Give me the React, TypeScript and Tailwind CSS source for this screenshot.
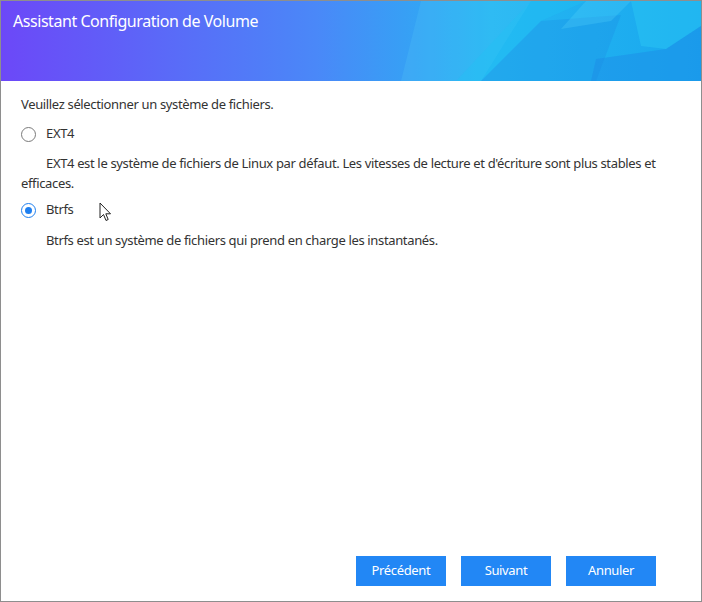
import React, { useState } from 'react'

const FONT = { fontFamily: '"Segoe UI", "Noto Sans", "Open Sans", sans-serif' }

function Radio({ checked }: { checked: boolean }) {
  return (
    <span
      className={
        checked
          ? 'flex h-[15px] w-[15px] items-center justify-center rounded-full border-[1.5px] border-[#1e7ff0] bg-white'
          : 'flex h-[15px] w-[15px] items-center justify-center rounded-full border border-[#7a7a7a] bg-white'
      }
    >
      {checked && <span className="h-[7px] w-[7px] rounded-full bg-[#1e7ff0]" />}
    </span>
  )
}

function HeaderArt() {
  return (
    <svg className="absolute inset-0 h-full w-full" viewBox="0 0 700 80" preserveAspectRatio="none">
      <defs>
        <linearGradient id="hdr" x1="0" y1="0" x2="1" y2="0">
          <stop offset="0" stopColor="#6c48f8" />
          <stop offset="0.45" stopColor="#4a88f8" />
          <stop offset="0.7" stopColor="#25b6f2" />
          <stop offset="1" stopColor="#19a8ee" />
        </linearGradient>
      </defs>
      <rect width="700" height="80" fill="url(#hdr)" />
      <polygon points="420,0 530,0 480,80 400,80" fill="#5cd0f8" opacity="0.18" />
      <polygon points="530,0 585,0 540,20 480,80 455,80" fill="#1fc4f4" opacity="0.35" />
      <polygon points="540,20 620,14 595,80 480,80" fill="#1d8fe6" opacity="0.35" />
      <polygon points="630,0 700,0 700,25 665,48 640,45" fill="#32d2f6" opacity="0.35" />
      <polygon points="595,58 665,48 700,25 700,80 590,80" fill="#1d8ae6" opacity="0.45" />
      <polygon points="585,0 630,0 610,20 560,28" fill="#5ad8fa" opacity="0.25" />
    </svg>
  )
}

export default function App() {
  const [fs, setFs] = useState<'ext4' | 'btrfs'>('btrfs')
  return (
    <div className="h-[602px] w-[702px] bg-white" style={FONT}>
      <div className="flex h-full w-full flex-col border border-[#8e8e8e] bg-white text-[13px] tracking-[-0.35px] text-[#333333]">
        <div className="relative h-[80px] shrink-0 overflow-hidden">
          <HeaderArt />
          <h1 className="relative pl-[12px] pt-[9px] text-[16px] font-normal leading-[22px] tracking-[-0.45px] text-white">
            Assistant Configuration de Volume
          </h1>
        </div>

        <div className="flex-1 px-[20px] pt-[13px]">
          <p className="leading-[20px]">Veuillez sélectionner un système de fichiers.</p>

          <label className="mt-[10px] flex h-[20px] cursor-pointer items-center gap-[10px]" onClick={() => setFs('ext4')}>
            <Radio checked={fs === 'ext4'} />
            <span>EXT4</span>
          </label>
          <p className="mt-[9px] pr-[20px] leading-[20px] indent-[25px]">
            EXT4 est le système de fichiers de Linux par défaut. Les vitesses de lecture et d'écriture sont plus stables et
            efficaces.
          </p>

          <label className="relative mt-[7px] flex h-[20px] cursor-pointer items-center gap-[10px]" onClick={() => setFs('btrfs')}>
            <Radio checked={fs === 'btrfs'} />
            <span>Btrfs</span>
            <svg className="absolute left-[78px] top-[2px]" width="13" height="20" viewBox="0 0 13 20">
              <path d="M1 1 L1 16 L4.5 12.5 L7 18.5 L9.2 17.5 L6.8 11.8 L11.5 11.8 Z" fill="white" stroke="#222" strokeWidth="1" strokeLinejoin="round" />
            </svg>
          </label>
          <p className="mt-[10px] pl-[25px] leading-[20px]">
            Btrfs est un système de fichiers qui prend en charge les instantanés.
          </p>
        </div>

        <div className="flex shrink-0 justify-end gap-[15px] pb-[15px] pr-[45px]">
          <button className="h-[30px] w-[90px] bg-[#2287f5] text-[13px] text-white">Précédent</button>
          <button className="h-[30px] w-[90px] bg-[#2287f5] text-[13px] text-white">Suivant</button>
          <button className="h-[30px] w-[90px] bg-[#2287f5] text-[13px] text-white">Annuler</button>
        </div>
      </div>
    </div>
  )
}
